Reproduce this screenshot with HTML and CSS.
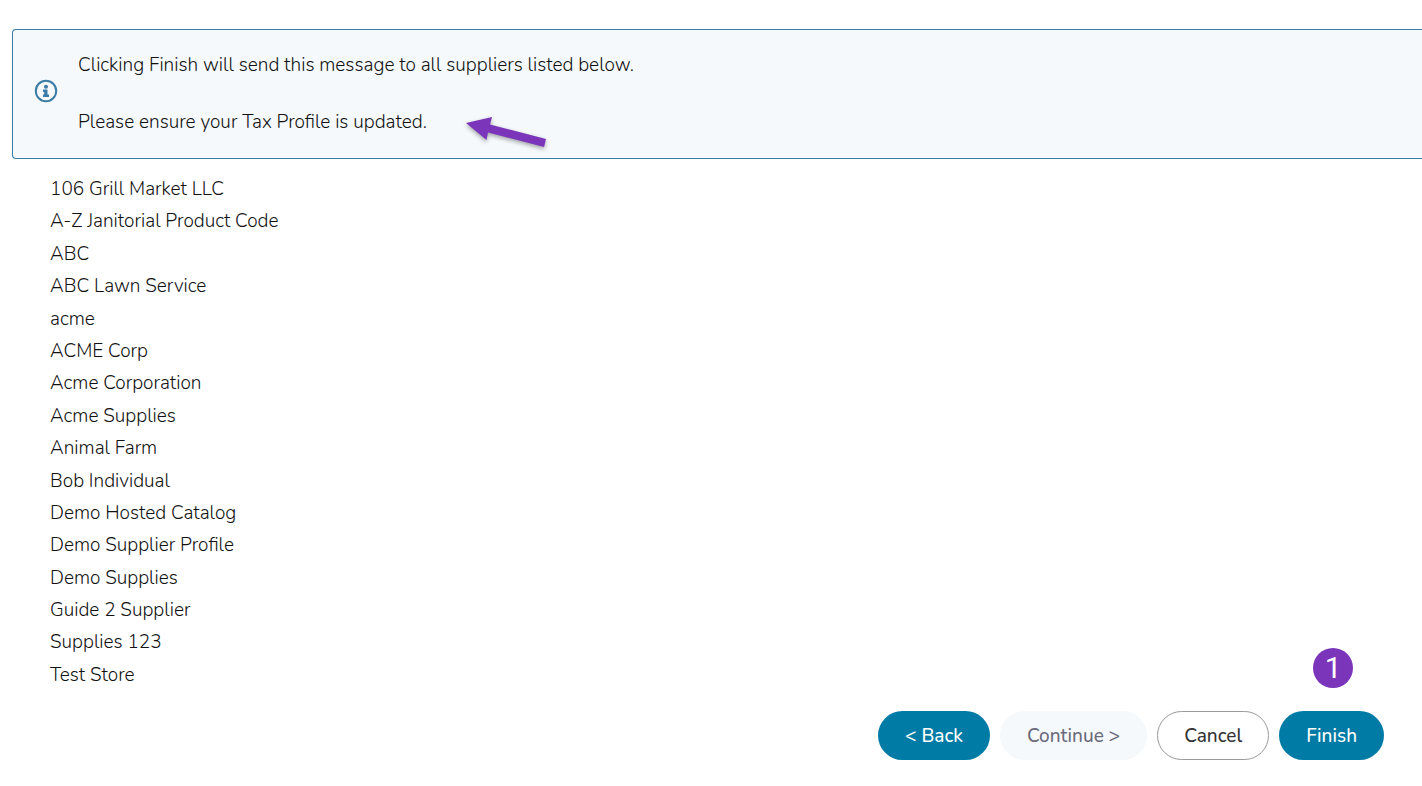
FILE: index.html
```html
<!DOCTYPE html>
<html lang="en">
<head>
<meta charset="UTF-8">
<meta name="viewport" content="width=device-width, initial-scale=1.0">
<title>Send Message to Suppliers</title>
<link rel="stylesheet" href="styles.css">
</head>
<body>
<main class="page">
    <section class="notice">
        <svg class="notice-icon" viewBox="0 0 24 24" aria-hidden="true">
            <circle cx="12" cy="12" r="10.2" fill="none" stroke="currentColor" stroke-width="2"/>
            <circle cx="12" cy="7.8" r="2" fill="currentColor"/>
            <path d="M9 10.500h4.500v5H15V18H9v-2.500h1.200v-2.500H9z" fill="currentColor"/>
        </svg>
        <div class="notice-text">
            <p>Clicking Finish will send this message to all suppliers listed below.</p>
            <p class="pointed">Please ensure your Tax Profile is updated.
                <svg class="arrow" viewBox="0 0 90 40" aria-hidden="true">
                    <path d="M4 8L30 2L28 9.500L84 24L82 32L26 17.500L24.500 25z" fill="#7b35ba"/>
                </svg>
            </p>
        </div>
    </section>

    <ul class="suppliers">
        <li>106 Grill Market LLC</li>
        <li>A-Z Janitorial Product Code</li>
        <li>ABC</li>
        <li>ABC Lawn Service</li>
        <li>acme</li>
        <li>ACME Corp</li>
        <li>Acme Corporation</li>
        <li>Acme Supplies</li>
        <li>Animal Farm</li>
        <li>Bob Individual</li>
        <li>Demo Hosted Catalog</li>
        <li>Demo Supplier Profile</li>
        <li>Demo Supplies</li>
        <li>Guide 2 Supplier</li>
        <li>Supplies 123</li>
        <li>Test Store</li>
    </ul>

    <div class="actions">
        <button type="button" class="btn primary">&lt; Back</button>
        <button type="button" class="btn" disabled>Continue &gt;</button>
        <button type="button" class="btn outline">Cancel</button>
        <div class="finish">
            <span class="step">1</span>
            <button type="submit" class="btn primary">Finish</button>
        </div>
    </div>
</main>
</body>
</html>
```
FILE: styles.css
```css
* {
    box-sizing: border-box;
}
body {
    margin: 0;
    font-family: Nunito, "Nunito Sans", Lato, sans-serif;
    font-size: 19px;
    font-weight: 300;
    color: #111;
    background-color: #fff;
}
.page {
    display: flex;
    flex-direction: column;
    min-height: 100vh;
    padding: 29px 0 26px 12px;
}
.notice {
    display: flex;
    align-items: center;
    gap: 20px;
    padding: 21px 20px 21px 21px;
    border: 1px solid #3a7ca5;
    border-right: none;
    border-radius: 4px 0 0 4px;
    background-color: #f5f9fc;
}
.notice-icon {
    flex: none;
    width: 24px;
    height: 24px;
    margin-bottom: 6px;
    color: #3a7ca5;
}
.notice-text {
    display: flex;
    flex-direction: column;
    align-items: flex-start;
    gap: 28px;
    line-height: 29px;
}
.notice-text p {
    margin: 0;
}
.pointed {
    position: relative;
}
.arrow {
    position: absolute;
    left: 384px;
    top: 7px;
    width: 90px;
    height: 40px;
    filter: drop-shadow(0 2px 2px rgba(0, 0, 0, 0.35));
}
.suppliers {
    flex: 1;
    display: flex;
    flex-direction: column;
    justify-content: space-between;
    margin: 14px 0 20px;
    padding: 0 38px;
    line-height: 32px;
    list-style: none;
}
.actions {
    display: flex;
    justify-content: flex-end;
    gap: 10px;
    padding-right: 38px;
}
.btn {
    height: 49px;
    padding: 0 26px;
    border: 1px solid transparent;
    border-radius: 25px;
    font-family: inherit;
    font-size: 19px;
    font-weight: 500;
    cursor: pointer;
}
.btn:disabled {
    background-color: #f5f9fc;
    color: #6b6b7b;
    cursor: default;
}
.primary {
    background-color: #007ba5;
    color: #fff;
}
.outline {
    background-color: #fff;
    border-color: #999;
    color: #333;
}
.finish {
    position: relative;
}
.step {
    position: absolute;
    left: 34px;
    bottom: 72px;
    width: 40px;
    height: 40px;
    border-radius: 50%;
    background-color: #7b35ba;
    color: #fff;
    font-family: Roboto, sans-serif;
    font-size: 30px;
    font-weight: 400;
    line-height: 40px;
    text-align: center;
}
```
